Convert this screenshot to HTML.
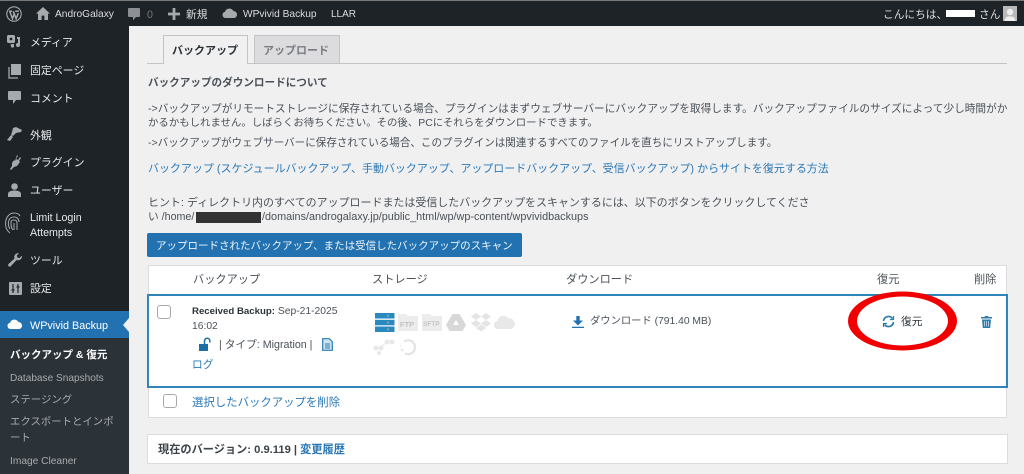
<!DOCTYPE html>
<html lang="ja"><head><meta charset="utf-8"><title>WPvivid Backup</title>
<style>
html,body{margin:0;padding:0;width:1024px;height:474px;overflow:hidden;background:#f0f0f1}
#p{position:relative;width:1024px;height:474px;overflow:hidden;font-family:"Liberation Sans","Noto Sans CJK JP",sans-serif;font-size:10.7px;color:#4a5158;filter:blur(.35px)}
.a{position:absolute}
.t{position:absolute;white-space:nowrap;line-height:14px;height:14px}
.l{color:#2b78b5}.b{font-weight:bold}
.m{color:#e6e7e8;font-size:10.9px}
.h{font-size:11.2px}
svg{position:absolute;overflow:visible}
.cb{position:absolute;width:12px;height:12px;border:1px solid #a7aaad;border-radius:3px;background:#fff}
</style></head><body><div id="p">

<div class="a" style="left:0;top:0;width:1024px;height:26px;background:#1d2327"></div>
<div class="a" style="left:0;top:0;width:1024px;height:1px;background:#777"></div>
<div class="a" style="left:0;top:26px;width:129px;height:448px;background:#1d2327"></div>
<div class="a" style="left:0;top:311px;width:129px;height:27px;background:#2271b1"></div>
<div class="a" style="left:0;top:338px;width:129px;height:136px;background:#2c3338"></div>

<!-- admin bar -->
<svg style="left:6px;top:6px" width="16" height="16" viewBox="0 0 16 16"><circle cx="8" cy="8" r="7.2" fill="none" stroke="#a7aaad" stroke-width="1.1"/><path d="M3 5.2h3.2M9.2 5.2h3.600M3.800 5.400l2.700 7.400 1.700-5-1-2.400M7.400 5.400l2.700 7.400 2.200-5.600" fill="none" stroke="#a7aaad" stroke-width="1.5"/></svg>
<svg style="left:36px;top:7px" width="14" height="13" viewBox="0 0 14 13"><path d="M7 0L0 6.600h2V13h3.600V8.600h2.800V13H12V6.600h2z" fill="#a7aaad"/></svg>
<span class="t" style="left:55px;top:8px;color:#dcdcde;font-size:10.2px">AndroGalaxy</span>
<svg style="left:128px;top:8px" width="12" height="13" viewBox="0 0 12 13"><path d="M1 0h10a1 1 0 0 1 1 1v7a1 1 0 0 1-1 1H8l-3 3.400V9H1a1 1 0 0 1-1-1V1a1 1 0 0 1 1-1z" fill="#8c8f94"/></svg>
<span class="t" style="left:147px;top:8px;color:#72777c">0</span>
<svg style="left:168px;top:8px" width="12" height="12" viewBox="0 0 12 12"><path d="M4.600 0h2.800v4.600H12v2.800H7.400V12H4.600V7.400H0V4.600h4.600z" fill="#a7aaad"/></svg>
<span class="t" style="left:186px;top:8px;color:#dcdcde">新規</span>
<svg style="left:222px;top:8px" width="16" height="10" viewBox="0 0 16 10"><path d="M3.400 10A3.200 3.200 0 0 1 3 3.700 4.600 4.600 0 0 1 11.400 3 3.600 3.600 0 0 1 12.600 10z" fill="#a7aaad"/></svg>
<span class="t" style="left:243px;top:8px;color:#dcdcde;font-size:10.2px">WPvivid Backup</span>
<span class="t" style="left:331px;top:8px;color:#dcdcde;font-size:10px">LLAR</span>
<span class="t" style="left:883px;top:8px;color:#dcdcde">こんにちは、</span>
<div class="a" style="left:946px;top:10px;width:29px;height:7px;background:#fff"></div>
<span class="t" style="left:979px;top:8px;color:#dcdcde">さん</span>
<div class="a" style="left:1003px;top:6px;width:14px;height:15px;background:#b9b9b9"></div>
<svg style="left:1003px;top:6px" width="14" height="15" viewBox="0 0 14 15"><circle cx="7" cy="6" r="3.200" fill="#eee"/><path d="M1.500 15c.5-4 3-4.600 5.500-4.600s5 .6 5.500 4.600z" fill="#eee"/></svg>

<!-- sidebar -->
<svg style="left:7px;top:35px" width="15" height="14" viewBox="0 0 15 14"><path d="M1 0h6l1 1v6l-1 1H1L0 7V1z" fill="#a7aaad"/><circle cx="4" cy="4" r="1.400" fill="#1d2327"/><path d="M10 2h3v8a2 2 0 1 1-2-2V4h-1zM3 9h4v2a1.600 1.600 0 1 1-1.500-1.600H3z" fill="#a7aaad"/></svg>
<span class="t m" style="left:30px;top:36px">メディア</span>
<svg style="left:8px;top:64px" width="13" height="14" viewBox="0 0 13 14"><path d="M3 0h10v11H3z" fill="#a7aaad"/><path d="M1 3v11h9" fill="none" stroke="#a7aaad" stroke-width="1.300"/></svg>
<span class="t m" style="left:30px;top:64px">固定ページ</span>
<svg style="left:8px;top:91px" width="13" height="14" viewBox="0 0 13 14"><path d="M1 0h11a1 1 0 0 1 1 1v7a1 1 0 0 1-1 1H8l-3 4V9H1a1 1 0 0 1-1-1V1a1 1 0 0 1 1-1z" fill="#a7aaad"/></svg>
<span class="t m" style="left:30px;top:92px">コメント</span>
<svg style="left:7px;top:127px" width="15" height="14" viewBox="0 0 15 14"><path d="M6 1l3-1 6 3-1 2-5 1-3 3-2-1 1-3zM4 8l2 2-3 4-3-1z" fill="#a7aaad"/></svg>
<span class="t m" style="left:30px;top:129px">外観</span>
<svg style="left:8px;top:155px" width="14" height="15" viewBox="0 0 14 15"><path d="M9 0l1 1-2 3 2 1 2-3 1 1-2 3 1 1-3 4-3 1-3 3-1-1 2-3 0-3 2-3 1 1z" fill="#a7aaad"/></svg>
<span class="t m" style="left:30px;top:156px">プラグイン</span>
<svg style="left:8px;top:183px" width="13" height="14" viewBox="0 0 13 14"><circle cx="6.500" cy="3.500" r="3.300" fill="#a7aaad"/><path d="M0 14v-3c0-2.500 3-3.500 6.500-3.500s6.500 1 6.500 3.500v3z" fill="#a7aaad"/></svg>
<span class="t m" style="left:30px;top:184px">ユーザー</span>
<svg style="left:4px;top:212px" width="18" height="22" viewBox="0 0 18 22" fill="none" stroke="#a7aaad" stroke-width="1"><path d="M6 21C2 18 1 13 2 8c1-4 4-7 8-7 3 0 5 1 6 3"/><path d="M6 17c-2-3-2-6-1-9 1-2 3-3 5-3 3 0 5 2 5 5"/><path d="M9 18c-2-2-2-5-2-8 0-1 1-2 3-2s3 1 3 3v7"/><path d="M10 11v7"/></svg>
<span class="t m" style="left:30px;top:211px;font-size:10.7px">Limit Login</span>
<span class="t m" style="left:30px;top:226px;font-size:10.7px">Attempts</span>
<svg style="left:8px;top:253px" width="14" height="14" viewBox="0 0 14 14"><path d="M14 3a4 4 0 0 1-5.400 4L3 13a1.600 1.600 0 0 1-2.500-2L6.500 5.500A4 4 0 0 1 11 .2L8.800 2.500l.6 2 2 .6L13.700 2.800z" fill="#a7aaad"/></svg>
<span class="t m" style="left:30px;top:254px">ツール</span>
<svg style="left:9px;top:282px" width="13" height="13" viewBox="0 0 13 13"><rect width="13" height="13" rx="1" fill="#a7aaad"/><path d="M4 2v9M9 2v9M2.500 8h3M7.500 5h3" stroke="#1d2327" stroke-width="1.200"/></svg>
<span class="t m" style="left:30px;top:282px">設定</span>
<svg style="left:7px;top:319px" width="16" height="10" viewBox="0 0 16 10"><path d="M3.400 10A3.200 3.200 0 0 1 3 3.700 4.600 4.600 0 0 1 11.400 3 3.600 3.600 0 0 1 12.600 10z" fill="#fff"/></svg>
<span class="t" style="left:30px;top:319px;color:#fff;font-size:10.800px">WPvivid Backup</span>
<div class="a" style="left:123px;top:318px;width:0;height:0;border:7px solid transparent;border-left:0;border-right:6px solid #f0f0f1"></div>
<span class="t b" style="left:10px;top:348px;color:#fff;font-size:10.500px">バックアップ &amp; 復元</span>
<span class="t" style="left:10px;top:372px;color:#a7aaad;font-size:10.100px">Database Snapshots</span>
<span class="t" style="left:10px;top:394px;color:#a7aaad;font-size:10.400px">ステージング</span>
<span class="t" style="left:10px;top:416px;color:#a7aaad;font-size:10.400px">エクスポートとインポ</span>
<span class="t" style="left:10px;top:432px;color:#a7aaad;font-size:10.400px">ート</span>
<span class="t" style="left:10px;top:455px;color:#a7aaad;font-size:10.200px">Image Cleaner</span>

<!-- tabs -->
<div class="a" style="left:147px;top:63px;width:860px;height:1px;background:#c3c4c7"></div>
<div class="a" style="left:163px;top:35px;width:85px;height:29px;background:#f0f0f1;border:1px solid #c3c4c7;border-bottom:0;box-sizing:border-box"></div>
<div class="a" style="left:254px;top:35px;width:86px;height:28px;background:#dcdcde;border:1px solid #c3c4c7;border-bottom:0;box-sizing:border-box"></div>
<span class="t b" style="left:172px;top:44px;color:#2c3338;font-size:11px">バックアップ</span>
<span class="t b" style="left:263px;top:44px;color:#787c82;font-size:11px">アップロード</span>

<!-- text -->
<span class="t b" style="left:148px;top:76px;color:#4a5158;font-size:10.600px">バックアップのダウンロードについて</span>
<span class="t" style="left:148px;top:102px;font-size:10.660px">-&gt;バックアップがリモートストレージに保存されている場合、プラグインはまずウェブサーバーにバックアップを取得します。バックアップファイルのサイズによって少し時間がか</span>
<span class="t" style="left:148px;top:117px;font-size:10.420px">かるかもしれません。しばらくお待ちください。その後、PCにそれらをダウンロードできます。</span>
<span class="t" style="left:148px;top:136px;font-size:10.550px">-&gt;バックアップがウェブサーバーに保存されている場合、このプラグインは関連するすべてのファイルを直ちにリストアップします。</span>
<span class="t l" style="left:148px;top:162px;font-size:10.970px">バックアップ (スケジュールバックアップ、手動バックアップ、アップロードバックアップ、受信バックアップ) からサイトを復元する方法</span>
<span class="t" style="left:148px;top:196px;font-size:10.970px">ヒント: ディレクトリ内のすべてのアップロードまたは受信したバックアップをスキャンするには、以下のボタンをクリックしてくださ</span>
<span class="t" style="left:148px;top:210px">い /home/</span>
<div class="a" style="left:196px;top:212px;width:65px;height:11px;background:#333"></div>
<span class="t" style="left:262px;top:210px;font-size:10.850px">/domains/androgalaxy.jp/public_html/wp/wp-content/wpvividbackups</span>

<div class="a" style="left:147px;top:233px;width:375px;height:24px;background:#2271b1;border-radius:2px"></div>
<span class="t" style="left:156px;top:239px;color:#f0f6fc;font-size:10.500px">アップロードされたバックアップ、または受信したバックアップのスキャン</span>

<!-- table -->
<div class="a" style="left:148px;top:265px;width:859px;height:153px;background:#fff;border:1px solid #dcdcde;box-sizing:border-box"></div>
<span class="t h" style="left:193px;top:273px">バックアップ</span>
<span class="t h" style="left:372px;top:273px">ストレージ</span>
<span class="t h" style="left:566px;top:273px">ダウンロード</span>
<span class="t h" style="left:877px;top:273px">復元</span>
<span class="t h" style="left:974px;top:273px">削除</span>

<div class="a" style="left:147px;top:294px;width:861px;height:94px;border:2px solid #2f85b8;background:#fff;box-sizing:border-box"></div>
<div class="cb" style="left:157px;top:305px"></div>
<span class="t" style="left:192px;top:304px"><b style="color:#2c3338;font-size:9.650px">Received Backup:</b> <span style="font-size:10.300px">Sep-21-2025</span></span>
<span class="t" style="left:192px;top:320px;font-size:10.300px">16:02</span>
<svg style="left:199px;top:338px" width="13" height="13" viewBox="0 0 13 13"><rect x="0" y="6" width="9" height="7" fill="#1e6ea6"/><path d="M5.500 6V3a2.700 2.700 0 0 1 5.400 0v1.500" fill="none" stroke="#1e6ea6" stroke-width="1.500"/></svg>
<span class="t" style="left:219px;top:338px">| タイプ: Migration |</span>
<svg style="left:322px;top:338px" width="11" height="13" viewBox="0 0 11 13"><path d="M.7.700h6.600l3 3v8.600H.7z" fill="#cfe3f0" stroke="#2c7cae" stroke-width="1.200"/><path d="M3 6h5M3 8h5M3 10h5" stroke="#2c7cae"/></svg>
<span class="t l" style="left:192px;top:358px">ログ</span>

<!-- storage icons -->
<svg style="left:375px;top:313px" width="20" height="19" viewBox="0 0 20 19"><rect width="19.500" height="5.500" fill="#2a8abf"/><rect y="6.800" width="19.500" height="5.500" fill="#2a8abf"/><rect y="13.500" width="19.500" height="5.500" fill="#2a8abf"/><circle cx="13" cy="2.700" r="1" fill="#9aa"/><circle cx="13" cy="9.500" r="1" fill="#9aa"/><circle cx="13" cy="16.200" r="1" fill="#9aa"/></svg>
<svg style="left:398px;top:314px" width="20" height="17" viewBox="0 0 20 17"><path d="M0 0h8l2 2h10v15H0z" fill="#ececec"/></svg>
<span class="t" style="left:400px;top:318px;font-size:7.500px;color:#b0b0b0">FTP</span>
<svg style="left:422px;top:314px" width="20" height="17" viewBox="0 0 20 17"><path d="M0 0h8l2 2h10v15H0z" fill="#ececec"/></svg>
<span class="t" style="left:423px;top:318px;font-size:6.500px;color:#b0b0b0">SFTP</span>
<svg style="left:446px;top:314px" width="20" height="17" viewBox="0 0 20 17"><path d="M6.500 0h7L20 11l-3.500 6h-13L0 11z" fill="#d8d8d8"/><path d="M10 6l3 5H7z" fill="#fff"/></svg>
<svg style="left:471px;top:313px" width="20" height="19" viewBox="0 0 20 19" fill="#e4e4e4"><path d="M5 0l5 3.500L5 7 0 3.500zM15 0l5 3.500L15 7l-5-3.500zM5 7l5 3.500L5 14l-5-3.500zM15 7l5 3.500L15 14l-5-3.500zM10 11.500l5 3.500-5 3.500L5 15z"/></svg>
<svg style="left:494px;top:314px" width="21" height="15" viewBox="0 0 21 15"><path d="M4 15a4 4 0 0 1-.5-8A6 6 0 0 1 14.500 4.500 5.200 5.200 0 0 1 16.500 15z" fill="#e8e8e8"/></svg>
<svg style="left:373px;top:339px" width="22" height="16" viewBox="0 0 22 16" fill="#e8e8e8"><circle cx="3" cy="9" r="2.500"/><circle cx="8" cy="9" r="2.500"/><circle cx="6" cy="14" r="2"/><circle cx="14" cy="3" r="2.500"/><circle cx="19" cy="3" r="2.500"/><path d="M8 8l6-5" stroke="#e8e8e8"/></svg>
<svg style="left:400px;top:339px" width="16" height="16" viewBox="0 0 16 16" fill="none" stroke="#e4e4e4" stroke-width="2.200"><path d="M4 2.500A7 7 0 1 1 5 14.500"/><path d="M1.500 10l1 2M1 6.500v1"/></svg>

<!-- download -->
<svg style="left:572px;top:316px" width="12" height="12" viewBox="0 0 12 12"><path d="M4.300 0h3.400v4.500H11L6 9.500 1 4.500h3.300zM0 10.800h12V12H0z" fill="#2271b1"/></svg>
<span class="t" style="left:590px;top:315px;font-size:10.300px">ダウンロード (791.40 MB)</span>

<!-- red circle + restore -->
<svg style="left:840px;top:285px" width="126" height="76" viewBox="0 0 126 76"><ellipse cx="62.500" cy="36" rx="54.500" ry="29.500" fill="#f00000"/><ellipse cx="62.500" cy="36" rx="45.500" ry="24.500" fill="#fff"/></svg>
<svg style="left:882px;top:315px" width="13" height="13" viewBox="0 0 13 13" fill="none" stroke="#2c7cae" stroke-width="1.700"><path d="M1.500 6a5 5 0 0 1 9-2.500"/><path d="M11.500 7a5 5 0 0 1-9 2.500"/><path d="M11.500 1v3.500H8M1.500 12V8.500H5" stroke-width="1.200"/></svg>
<span class="t" style="left:901px;top:315px;color:#2c3338">復元</span>
<svg style="left:981px;top:316px" width="11" height="12" viewBox="0 0 11 12"><path d="M4 0h3l.5 1H11v1.500H0V1h3.500z" fill="#2c7cae"/><path d="M1 3.500h9l-.8 8.500H1.800z" fill="#2c7cae"/><path d="M3.700 5v5.500M5.500 5v5.500M7.300 5v5.500" stroke="#fff" stroke-width=".6"/></svg>

<div class="cb" style="left:163px;top:394px"></div>
<span class="t l" style="left:192px;top:396px;font-size:11.400px">選択したバックアップを削除</span>

<!-- version -->
<div class="a" style="left:147px;top:434px;width:861px;height:30px;background:#fff;border:1px solid #dcdcde;box-sizing:border-box"></div>
<span class="t" style="left:158px;top:443px;color:#3c434a;font-size:11.200px"><b>現在のバージョン: 0.9.119 | </b><b class="l">変更履歴</b></span>
</div></body></html>
